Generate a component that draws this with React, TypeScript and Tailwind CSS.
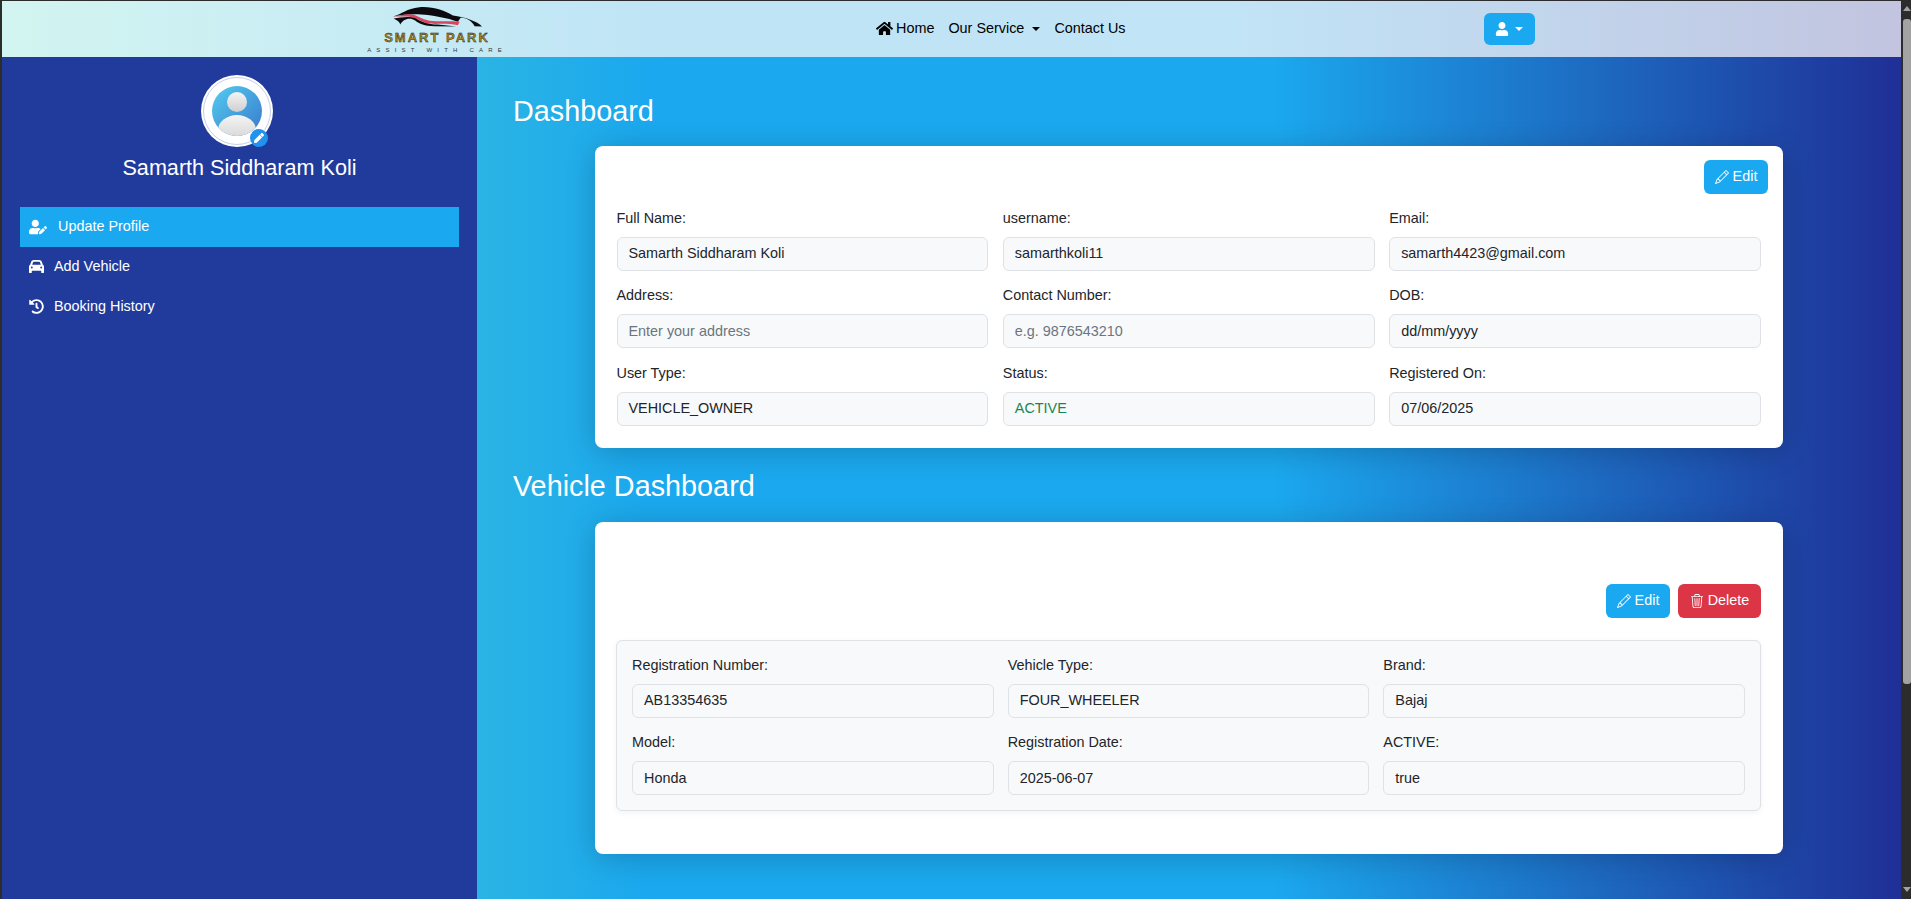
import { FaHistory, FaHome, FaPen, FaUser, FaUserEdit } from "react-icons/fa";
import { FaCar } from "react-icons/fa6";
import { BsPencil, BsTrash3 } from "react-icons/bs";
import type { ReactNode } from "react";

const profileFields = [
  { label: "Full Name:", value: "Samarth Siddharam Koli" },
  { label: "username:", value: "samarthkoli11" },
  { label: "Email:", value: "samarth4423@gmail.com" },
  { label: "Address:", value: "Enter your address", muted: true },
  { label: "Contact Number:", value: "e.g. 9876543210", muted: true },
  { label: "DOB:", value: "dd/mm/yyyy" },
  { label: "User Type:", value: "VEHICLE_OWNER" },
  { label: "Status:", value: "ACTIVE", green: true },
  { label: "Registered On:", value: "07/06/2025" },
];

const vehicleFields = [
  { label: "Registration Number:", value: "AB13354635" },
  { label: "Vehicle Type:", value: "FOUR_WHEELER" },
  { label: "Brand:", value: "Bajaj" },
  { label: "Model:", value: "Honda" },
  { label: "Registration Date:", value: "2025-06-07" },
  { label: "ACTIVE:", value: "true" },
];

type FieldProps = { label: string; value: string; muted?: boolean; green?: boolean };

function Field({ label, value, muted, green }: FieldProps) {
  const color = muted ? "text-[#6c757d]" : green ? "text-[#198754]" : "text-[#212529]";
  return (
    <div className="flex flex-col">
      <label className="h-[24px] leading-[24px] text-[14.4px] text-[#212529]">{label}</label>
      <div className={`mt-[7px] h-[34px] flex items-center px-[11px] text-[14.4px] bg-[#f8f9fa] border border-[#dee2e6] rounded-[6px] ${color}`}>
        {value}
      </div>
    </div>
  );
}

function ActionButton({ className, icon, children }: { className: string; icon: ReactNode; children: ReactNode }) {
  return (
    <button className={`h-[34px] flex items-center justify-center gap-[4px] rounded-[6px] text-white text-[14.4px] ${className}`}>
      {icon}
      {children}
    </button>
  );
}

function Logo() {
  return (
    <div className="w-[138px] h-[54px] flex flex-col items-center">
      <svg viewBox="150 15 275 65" className="w-[92px] h-[22px] mt-[4px]">
        <path d="M155 46 C185 38 195 22 235 18 C275 15 310 28 335 43 C372 48 408 60 422 76 L400 75 C392 60 375 48 358 50 L350 62 C320 50 270 42 240 40 C215 38 190 40 155 46 Z" fill="#0b0b0f" />
        <path d="M155 47 C180 42 205 36 222 42 C240 50 255 60 285 60 C310 61 340 58 355 62 L350 72 C320 65 280 70 260 67 C240 62 225 50 205 47 C190 46 175 46 155 47 Z" fill="#d9455f" />
        <path d="M158 52 C170 58 175 62 178 70 C185 55 205 47 222 58 C235 68 250 75 280 75 L345 76 L290 70 C260 70 240 62 225 52 C205 44 180 48 158 52 Z" fill="#0b0b0f" />
      </svg>
      <div className="mt-[3px] h-[13px] leading-[13px] text-[13px] font-bold tracking-[2px] text-[#a5852b] [-webkit-text-stroke:0.4px_#1c1508] whitespace-nowrap">
        SMART PARK
      </div>
      <div className="mt-[3px] h-[7px] leading-[7px] text-[6px] tracking-[5.2px] text-[#2b3440] whitespace-nowrap">ASSIST WITH CARE</div>
    </div>
  );
}

function Navbar() {
  return (
    <header className="h-[56px] shrink-0 flex items-center bg-[linear-gradient(90deg,#d2f5f1_0%,#bfe4f6_35%,#c1e4f6_65%,#c2c4e0_100%)] text-[14.4px] text-black">
      <div className="ml-[366px] w-[508px] shrink-0">
        <Logo />
      </div>
      <nav className="flex items-center">
        <a className="flex items-center gap-[3px]">
          <FaHome className="text-[17px]" />
          Home
        </a>
        <a className="ml-[14px] flex items-center">
          Our Service
          <span className="ml-[8px] w-0 h-0 border-x-[4px] border-x-transparent border-t-[4px] border-t-black" />
        </a>
        <a className="ml-[14px]">Contact Us</a>
      </nav>
      <button className="ml-[358px] w-[51px] h-[32px] flex items-center justify-center gap-[6px] rounded-[6px] bg-[#1aa9f0] text-white">
        <FaUser className="text-[14px]" />
        <span className="w-0 h-0 border-x-[4px] border-x-transparent border-t-[4px] border-t-white" />
      </button>
    </header>
  );
}

function Avatar() {
  return (
    <div className="relative mr-[5px] w-[72px] h-[72px] rounded-full bg-white flex items-center justify-center">
      <span className="absolute inset-[2px] rounded-full border border-[#c8cde8]" />
      <svg viewBox="0 0 50 50" className="w-[50px] h-[50px]">
        <defs>
          <linearGradient id="avatarBg" x1="0" y1="0" x2="1" y2="1">
            <stop offset="0" stopColor="#52cdf0" />
            <stop offset="1" stopColor="#3a78cc" />
          </linearGradient>
          <linearGradient id="avatarFg" x1="0" y1="0" x2="0" y2="1">
            <stop offset="0" stopColor="#f4f4f4" />
            <stop offset="1" stopColor="#cfcfcf" />
          </linearGradient>
          <clipPath id="avatarClip">
            <circle cx="25" cy="25" r="25" />
          </clipPath>
        </defs>
        <circle cx="25" cy="25" r="25" fill="url(#avatarBg)" />
        <g clipPath="url(#avatarClip)">
          <circle cx="25" cy="16" r="10" fill="url(#avatarFg)" />
          <ellipse cx="25" cy="44" rx="19" ry="15" fill="url(#avatarFg)" />
        </g>
      </svg>
      <span className="absolute right-[5px] bottom-0 w-[18px] h-[18px] rounded-full bg-[#1f93ee] flex items-center justify-center text-white">
        <FaPen className="text-[10px]" />
      </span>
    </div>
  );
}

function Sidebar() {
  return (
    <aside className="w-[475px] shrink-0 bg-[#213b9d] text-white pt-[18px]">
      <div className="flex flex-col items-center">
        <Avatar />
        <h4 className="mt-[8px] h-[26px] leading-[26px] text-[21.6px]">Samarth Siddharam Koli</h4>
      </div>
      <ul className="mt-[26px] mx-[18px] w-[439px] text-[14.4px]">
        <li className="h-[40px] flex items-center bg-[#1aa9f0] pl-[9px] pb-[1px]">
          <FaUserEdit className="text-[18px] mr-[11px]" />
          Update Profile
        </li>
        <li className="h-[40px] flex items-center pl-[9px] pb-[1px]">
          <FaCar className="text-[15px] mr-[10px]" />
          Add Vehicle
        </li>
        <li className="h-[40px] flex items-center pl-[9px] pb-[1px]">
          <FaHistory className="text-[15px] mr-[10px]" />
          Booking History
        </li>
      </ul>
    </aside>
  );
}

function Scrollbar() {
  return (
    <div className="w-[10px] shrink-0 flex flex-col items-end pt-[6px] pb-[7px]">
      <span className="w-0 h-0 border-x-[4px] border-x-transparent border-b-[5px] border-b-[#a3a3a3]" />
      <div className="mt-[8px] w-[8px] h-[665px] rounded-[3px] bg-[#a3a3a3]" />
      <span className="mt-auto w-0 h-0 border-x-[4px] border-x-transparent border-t-[5px] border-t-[#a3a3a3]" />
    </div>
  );
}

export default function App() {
  return (
    <div className="h-[899px] overflow-hidden flex bg-[#2c2c2c] font-['Liberation_Sans',Arial,sans-serif]">
      <div className="ml-[2px] mt-[1px] flex-1 min-w-0 flex flex-col">
        <Navbar />
        <div className="flex-1 flex min-h-0">
          <Sidebar />
          <main className="flex-1 min-w-0 pl-[36px] bg-[linear-gradient(90deg,#2ab4e4_0%,#1ba8ee_12%,#1ba8ee_56%,#1f2f96_100%)]">
            <h2 className="mt-[37px] h-[34px] leading-[34px] text-[28.8px] text-white">Dashboard</h2>
            <section className="mt-[18px] ml-[82px] w-[1188px] h-[302px] bg-white rounded-[8px] shadow-[0_4px_30px_rgba(0,0,0,0.2)] pt-[14px] px-[22px]">
              <div className="flex justify-end">
                <ActionButton className="w-[64px] mr-[-7px] bg-[#1aa9f0]" icon={<BsPencil className="text-[14px]" />}>
                  Edit
                </ActionButton>
              </div>
              <div className="mt-[12px] ml-[-0.5px] grid grid-cols-3 gap-x-[14.5px] gap-y-[12.4px]">
                {profileFields.map((f) => (
                  <Field key={f.label} {...f} />
                ))}
              </div>
            </section>
            <h2 className="mt-[21px] h-[34px] leading-[34px] text-[28.8px] text-white">Vehicle Dashboard</h2>
            <section className="mt-[19px] ml-[82px] w-[1188px] h-[332px] bg-white rounded-[8px] shadow-[0_4px_30px_rgba(0,0,0,0.2)] pt-[62px] px-[22px]">
              <div className="flex justify-end gap-[8px]">
                <ActionButton className="w-[64px] bg-[#1aa9f0]" icon={<BsPencil className="text-[14px]" />}>
                  Edit
                </ActionButton>
                <ActionButton className="w-[83px] bg-[#dc3545]" icon={<BsTrash3 className="text-[14px]" />}>
                  Delete
                </ActionButton>
              </div>
              <div className="mt-[22px] ml-[-1px] h-[171px] bg-[#f8f9fa] border border-[#dee2e6] rounded-[6px] shadow-[0_2px_6px_rgba(0,0,0,0.05)] pt-[12px] px-[15px]">
                <div className="grid grid-cols-3 gap-x-[14px] gap-y-[12.4px]">
                  {vehicleFields.map((f) => (
                    <Field key={f.label} {...f} />
                  ))}
                </div>
              </div>
            </section>
          </main>
        </div>
      </div>
      <Scrollbar />
    </div>
  );
}
